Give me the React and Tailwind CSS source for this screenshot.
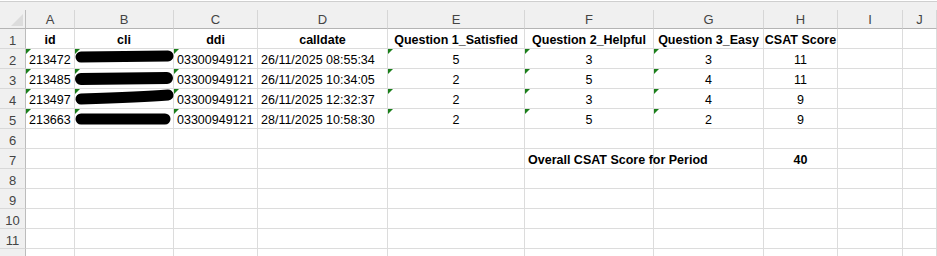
import React from "react";

const COLS = "grid grid-cols-[26px_49px_99px_84px_130px_137px_129px_110px_74px_65px_1fr]";
const LETTERS = ["A", "B", "C", "D", "E", "F", "G", "H", "I", "J"];

const rows = [
  { id: "213472", ddi: "03300949121", date: "26/11/2025 08:55:34", q1: 5, q2: 3, q3: 3, csat: 11, blob: "M6 8 L93 7", w: 11 },
  { id: "213485", ddi: "03300949121", date: "26/11/2025 10:34:05", q1: 2, q2: 5, q3: 4, csat: 11, blob: "M6 10 L92 9", w: 12 },
  { id: "213497", ddi: "03300949121", date: "26/11/2025 12:32:37", q1: 2, q2: 3, q3: 4, csat: 9, blob: "M6 10 C40 9 70 8 93 6", w: 11 },
  { id: "213663", ddi: "03300949121", date: "28/11/2025 10:58:30", q1: 2, q2: 5, q3: 2, csat: 9, blob: "M6 10 L90 10", w: 11 },
];

function Flag() {
  return (
    <span className="absolute left-0 top-0 w-0 h-0 border-t-[5px] border-r-[5px] border-t-[#1a7f1a] border-r-transparent" />
  );
}

function Cell({ children, align = "left", bold, flag, className = "" }) {
  const justify =
    align === "center" ? "justify-center" : align === "right" ? "justify-end" : "justify-start";
  return (
    <div
      className={`relative h-5 border-r border-b border-[#dcdcdc] flex items-end ${justify} px-[3px] whitespace-nowrap leading-[13px] pb-[1px] ${
        bold ? "font-bold" : ""
      } ${className}`}
    >
      {flag && <Flag />}
      {children}
    </div>
  );
}

function RowHead({ n }) {
  return (
    <div className="h-5 bg-[#f0f0f0] border-r border-r-[#bcbcbc] border-b border-b-[#d8d8d8] flex items-end justify-center pb-[1px] leading-[13px] text-[13px] text-[#444]">
      {n}
    </div>
  );
}

function Redacted({ d, w }) {
  return (
    <svg className="absolute left-0 top-0" width="99" height="19" viewBox="0 0 99 19">
      <path d={d} stroke="#000" strokeWidth={w} strokeLinecap="round" fill="none" />
    </svg>
  );
}

export default function App() {
  const empty = (k) => (
    <div key={k} className="h-5 border-r border-b border-[#dcdcdc]" />
  );

  return (
    <div
      className="w-[937px] h-[256px] overflow-hidden bg-white text-black text-[12.5px]"
      style={{ fontFamily: '"Liberation Sans", Arial, sans-serif' }}
    >
      {/* top strip */}
      <div className="h-[1px] bg-white" />
      <div className="h-[1px] bg-[#cfcfcf]" />
      <div className="h-[8px] bg-[#f0f0f0]" />

      {/* column headers */}
      <div className={`${COLS} h-[19px] bg-[#f0f0f0]`}>
        <div className="relative border-r border-[#bcbcbc] border-b border-b-[#b4b4b4]">
          <svg className="absolute left-0 top-[-8px]" width="26" height="27" viewBox="0 0 26 27">
            <path d="M11 24 L23 24 L23 12 Z" fill="#dcdcdc" />
          </svg>
        </div>
        {LETTERS.map((l) => (
          <div
            key={l}
            className="border-r border-r-[#d6d6d6] border-b border-b-[#b4b4b4] flex items-end justify-center pb-[2px] leading-[13px] text-[13px] text-[#444]"
          >
            {l}
          </div>
        ))}
      </div>

      {/* row 1 */}
      <div className={COLS}>
        <RowHead n={1} />
        <Cell align="center" bold>id</Cell>
        <Cell align="center" bold>cli</Cell>
        <Cell align="center" bold>ddi</Cell>
        <Cell align="center" bold>calldate</Cell>
        <Cell align="center" bold>Question 1_Satisfied</Cell>
        <Cell align="center" bold>Question 2_Helpful</Cell>
        <Cell align="center" bold>Question 3_Easy</Cell>
        <Cell align="center" bold>CSAT Score</Cell>
        {empty("i")}
        {empty("j")}
      </div>

      {/* data rows */}
      {rows.map((r, i) => (
        <div key={r.id} className={COLS}>
          <RowHead n={i + 2} />
          <Cell flag>{r.id}</Cell>
          <Cell flag>
            <Redacted d={r.blob} w={r.w} />
          </Cell>
          <Cell flag>{r.ddi}</Cell>
          <Cell>{r.date}</Cell>
          <Cell align="center" flag>{r.q1}</Cell>
          <Cell align="center" flag>{r.q2}</Cell>
          <Cell align="center" flag>{r.q3}</Cell>
          <Cell align="center">{r.csat}</Cell>
          {empty("i")}
          {empty("j")}
        </div>
      ))}

      {/* row 6 */}
      <div className={COLS}>
        <RowHead n={6} />
        {LETTERS.map((l) => empty(l))}
      </div>

      {/* row 7 */}
      <div className={COLS}>
        <RowHead n={7} />
        {empty("a")}
        {empty("b")}
        {empty("c")}
        {empty("d")}
        {empty("e")}
        <Cell bold className="overflow-visible z-10">Overall CSAT Score for Period</Cell>
        {empty("g")}
        <Cell align="center" bold>40</Cell>
        {empty("i")}
        {empty("j")}
      </div>

      {[8, 9, 10, 11, 12, 13].map((n) => (
        <div key={n} className={COLS}>
          <RowHead n={n} />
          {LETTERS.map((l) => empty(l))}
        </div>
      ))}
    </div>
  );
}
